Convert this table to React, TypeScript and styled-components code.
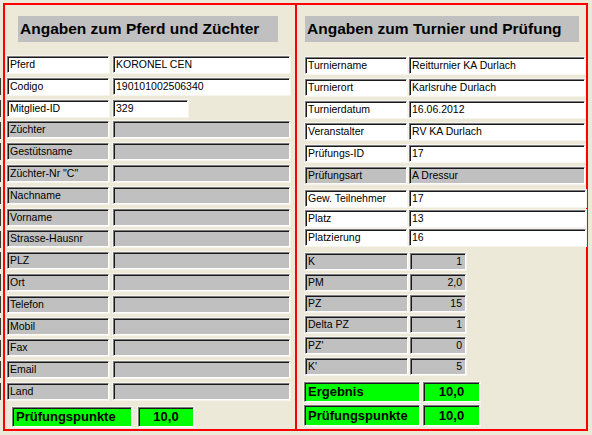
import React from "react";
import styled, { createGlobalStyle } from "styled-components";

const Global = createGlobalStyle`
  html, body { margin: 0; padding: 0; background: #ECE9D8; }
  body { font-family: "Liberation Sans", Arial, sans-serif; }
`;

const Page = styled.div`
  display: flex;
  padding-top: 3px;
  width: 592px;
  height: 435px;
  box-sizing: border-box;
`;

const Gutter = styled.div`
  display: flex;
  flex-direction: column;
  width: 3px;
  flex: none;
  padding-top: 75px;
  gap: 4.8px;
`;

const Tick = styled.span`
  display: block;
  width: 1px;
  height: 17px;
  background: #3a3a3a;
`;

const Frame = styled.div`
  display: flex;
  border: 2px solid #FF0000;
  width: 585px;
  height: 428px;
  box-sizing: border-box;
  background: #ECE9D8;
`;

const Panel = styled.section<{ $w: number; $divider?: boolean }>`
  display: flex;
  flex-direction: column;
  width: ${(p) => p.$w}px;
  flex: none;
  ${(p) => (p.$divider ? "border-right: 2px solid #FF0000;" : "")}
`;

const Header = styled.h2<{ $ml: number; $w: number }>`
  margin: 11px 0 0 ${(p) => p.$ml}px;
  width: ${(p) => p.$w}px;
  height: 26px;
  box-sizing: border-box;
  background: #C0C0C0;
  color: #000;
  font-size: 15.5px;
  font-weight: bold;
  line-height: 26px;
  padding-left: 2px;
  white-space: nowrap;
`;

const Group = styled.div<{ $mt: number; $ml: number; $gap: number }>`
  display: flex;
  flex-direction: column;
  margin: ${(p) => p.$mt}px 0 0 ${(p) => p.$ml}px;
  gap: ${(p) => p.$gap}px;
`;

const Row = styled.div<{ $gap: number }>`
  display: flex;
  gap: ${(p) => p.$gap}px;
`;

type Tone = "white" | "gray" | "green";

const toneBg: Record<Tone, string> = {
  white: "#FFFFFF",
  gray: "#C0C0C0",
  green: "#00FF00",
};

const Field = styled.div<{
  $tone: Tone;
  $w: number;
  $h: number;
  $align?: "left" | "right" | "center";
  $bold?: boolean;
}>`
  width: ${(p) => p.$w}px;
  height: ${(p) => p.$h}px;
  box-sizing: border-box;
  flex: none;
  background: ${(p) => toneBg[p.$tone]};
  border-top: 1px solid #7c7c7c;
  border-left: 1px solid #7c7c7c;
  border-bottom: 1px solid #ffffff;
  border-right: 1px solid #ffffff;
  box-shadow: inset 1px 1px 0 #1a1a1a, 0 0 0 1px #F6F4EC;
  color: #000;
  font-size: ${(p) => (p.$bold ? "13px" : "10.5px")};
  font-weight: ${(p) => (p.$bold ? "bold" : "normal")};
  line-height: ${(p) => p.$h - 2}px;
  padding: ${(p) => (p.$bold ? "0 3px 0 3px" : "0 3px 0 2px")};
  text-align: ${(p) => p.$align ?? "left"};
  white-space: nowrap;
  overflow: hidden;
`;

type Item = { label: string; value: string; tone: Tone; vw?: number };

const leftRows: Item[] = [
  { label: "Pferd", value: "KORONEL CEN", tone: "white" },
  { label: "Codigo", value: "190101002506340", tone: "white" },
  { label: "Mitglied-ID", value: "329", tone: "white", vw: 75 },
  { label: "Züchter", value: "", tone: "gray" },
  { label: "Gestütsname", value: "", tone: "gray" },
  { label: "Züchter-Nr \"C\"", value: "", tone: "gray" },
  { label: "Nachname", value: "", tone: "gray" },
  { label: "Vorname", value: "", tone: "gray" },
  { label: "Strasse-Hausnr", value: "", tone: "gray" },
  { label: "PLZ", value: "", tone: "gray" },
  { label: "Ort", value: "", tone: "gray" },
  { label: "Telefon", value: "", tone: "gray" },
  { label: "Mobil", value: "", tone: "gray" },
  { label: "Fax", value: "", tone: "gray" },
  { label: "Email", value: "", tone: "gray" },
  { label: "Land", value: "", tone: "gray" },
];

const turnier: Item[] = [
  { label: "Turniername", value: "Reitturnier KA Durlach", tone: "white" },
  { label: "Turnierort", value: "Karlsruhe Durlach", tone: "white" },
  { label: "Turnierdatum", value: "16.06.2012", tone: "white" },
  { label: "Veranstalter", value: "RV KA Durlach", tone: "white" },
  { label: "Prüfungs-ID", value: "17", tone: "white" },
  { label: "Prüfungsart", value: "A Dressur", tone: "gray" },
];

const teilnehmer: Item[] = [
  { label: "Gew. Teilnehmer", value: "17", tone: "white" },
  { label: "Platz", value: "13", tone: "white" },
  { label: "Platzierung", value: "16", tone: "white" },
];

const werte: Item[] = [
  { label: "K", value: "1", tone: "gray" },
  { label: "PM", value: "2,0", tone: "gray" },
  { label: "PZ", value: "15", tone: "gray" },
  { label: "Delta PZ", value: "1", tone: "gray" },
  { label: "PZ'", value: "0", tone: "gray" },
  { label: "K'", value: "5", tone: "gray" },
];

export default function App() {
  return (
    <>
      <Global />
      <Page>
        <Gutter>
          {leftRows.slice(1).map((r) => (
            <Tick key={r.label} />
          ))}
        </Gutter>
        <Frame>
          <Panel $w={290} $divider>
            <Header $ml={13} $w={260}>Angaben zum Pferd und Züchter</Header>
            <Group $mt={14} $ml={2} $gap={4.8}>
              {leftRows.map((r) => (
                <Row key={r.label} $gap={4}>
                  <Field $tone={r.tone} $w={102} $h={17}>{r.label}</Field>
                  <Field $tone={r.tone} $w={r.vw ?? 177} $h={17}>{r.value}</Field>
                </Row>
              ))}
            </Group>
            <Group $mt={7} $ml={7} $gap={0}>
              <Row $gap={6}>
                <Field $tone="green" $w={120} $h={20} $bold>Prüfungspunkte</Field>
                <Field $tone="green" $w={56} $h={20} $bold $align="center">10,0</Field>
              </Row>
            </Group>
          </Panel>
          <Panel $w={291}>
            <Header $ml={8} $w={274}>Angaben zum Turnier und Prüfung</Header>
            <Group $mt={15} $ml={8} $gap={5}>
              {turnier.map((r) => (
                <Row key={r.label} $gap={2}>
                  <Field $tone={r.tone} $w={102} $h={17}>{r.label}</Field>
                  <Field $tone={r.tone} $w={176} $h={17}>{r.value}</Field>
                </Row>
              ))}
            </Group>
            <Group $mt={6} $ml={8} $gap={2.5}>
              {teilnehmer.map((r) => (
                <Row key={r.label} $gap={2}>
                  <Field $tone={r.tone} $w={102} $h={17}>{r.label}</Field>
                  <Field $tone={r.tone} $w={177} $h={17}>{r.value}</Field>
                </Row>
              ))}
            </Group>
            <Group $mt={7} $ml={8} $gap={4}>
              {werte.map((r) => (
                <Row key={r.label} $gap={2}>
                  <Field $tone={r.tone} $w={103} $h={17}>{r.label}</Field>
                  <Field $tone={r.tone} $w={56} $h={17} $align="right">{r.value}</Field>
                </Row>
              ))}
            </Group>
            <Group $mt={7} $ml={7} $gap={3}>
              <Row $gap={3}>
                <Field $tone="green" $w={116} $h={20} $bold>Ergebnis</Field>
                <Field $tone="green" $w={57} $h={20} $bold $align="center">10,0</Field>
              </Row>
              <Row $gap={3}>
                <Field $tone="green" $w={116} $h={21} $bold>Prüfungspunkte</Field>
                <Field $tone="green" $w={57} $h={21} $bold $align="center">10,0</Field>
              </Row>
            </Group>
          </Panel>
        </Frame>
      </Page>
    </>
  );
}
